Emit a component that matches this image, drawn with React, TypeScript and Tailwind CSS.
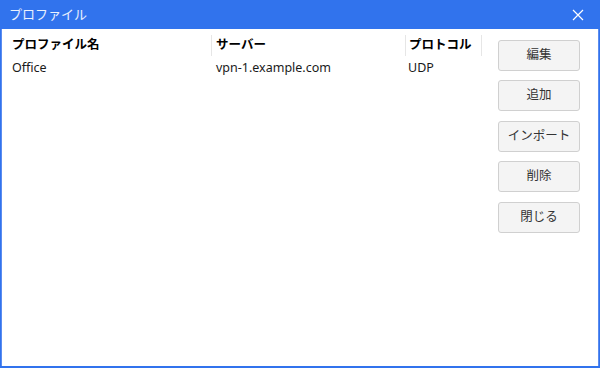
import React from "react";

const font = { fontFamily: '"Noto Sans", "Noto Sans CJK JP", sans-serif' };

export default function App() {
  const buttons = ["編集", "追加", "インポート", "削除", "閉じる"];
  return (
    <div className="w-[600px] h-[368px] flex flex-col bg-[#3173ed]" style={font}>
      <div className="h-[29px] flex items-center justify-between pl-[9px] pr-[16px] text-white/90 text-[13px]">
        <span>プロファイル</span>
        <svg width="12" height="12" viewBox="0 0 12 12" className="mt-[1px]">
          <path d="M1 1 L11 11 M11 1 L1 11" stroke="white" strokeWidth="1.2" />
        </svg>
      </div>
      <div className="flex-1 mx-[1px] mb-[2px] border-l border-r border-[#5b8cf0] bg-white flex">
        <div className="flex-1 flex flex-col pt-[5px] text-[12.5px] text-[#1a1a1a]">
          <div className="flex h-[22px] items-center font-bold text-black">
            <div className="w-[209px] pl-[10px]">プロファイル名</div>
            <div className="w-px h-[21px] bg-[#e6e6e6]" />
            <div className="w-[193px] pl-[4px]">サーバー</div>
            <div className="w-px h-[21px] bg-[#e6e6e6]" />
            <div className="w-[75px] pl-[3px]">プロトコル</div>
            <div className="w-px h-[21px] bg-[#e6e6e6]" />
          </div>
          <div className="flex h-[24px] items-center">
            <div className="w-[210px] pl-[10px]">Office</div>
            <div className="w-[193px] pl-[4px]">vpn-1.example.com</div>
            <div className="w-[76px] pl-[3px]">UDP</div>
          </div>
        </div>
        <div className="w-[100px] flex flex-col gap-[9.5px] pt-[10.5px] pr-[18px]">
          {buttons.map((b) => (
            <div
              key={b}
              className="w-[82px] h-[31px] flex items-center justify-center rounded-[3px] border border-[#d0d0d0] bg-[#f4f4f4] text-[12.5px] text-[#333]"
            >
              {b}
            </div>
          ))}
        </div>
      </div>
    </div>
  );
}
